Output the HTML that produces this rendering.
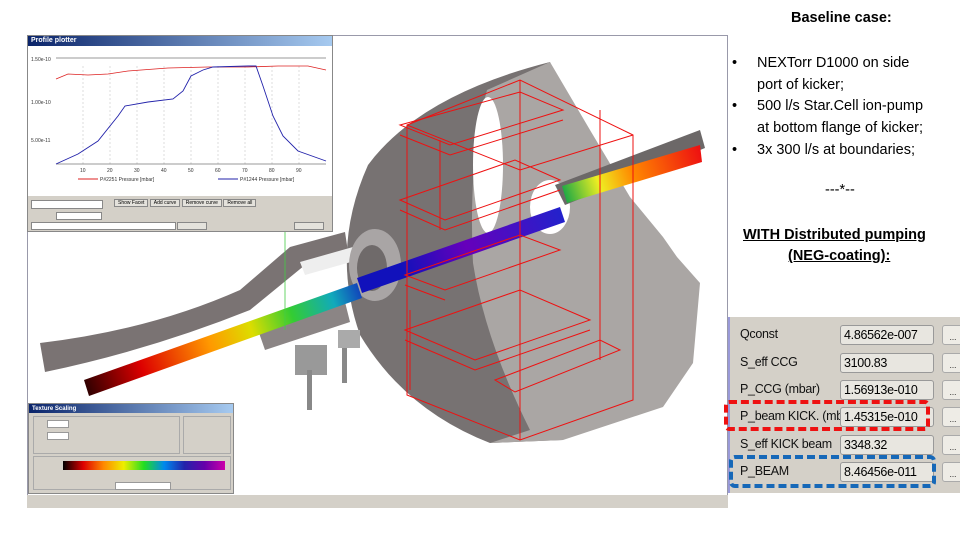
<!DOCTYPE html>
<html><head><meta charset="utf-8"><style>
*{margin:0;padding:0;box-sizing:border-box}
body{width:960px;height:540px;background:#fff;position:relative;overflow:hidden;font-family:"Liberation Sans",sans-serif}
.t{position:absolute;font-size:14.5px;color:#000;white-space:nowrap}
.win{position:absolute;background:#d4d0c8;border:1px solid #888}
.tb{height:10px;background:linear-gradient(90deg,#0a246a,#a6caf0);color:#fff;font-size:7px;font-weight:bold;padding-left:3px;line-height:10px}
.lbl{position:absolute;left:10px;font-size:12.5px;color:#111;letter-spacing:-0.3px}
.val{position:absolute;left:110px;width:94px;height:20px;border:1px solid #999;border-radius:3px;background:#e8e6e0;font-size:12.5px;padding-left:3px;line-height:19px;letter-spacing:-0.3px}
.btn{position:absolute;left:212px;width:22px;height:20px;border:1px solid #aaa;border-radius:3px;background:#eeece6;font-size:8px;text-align:center;line-height:24px}
</style></head><body>
<div style="position:absolute;left:27px;top:35px;width:701px;height:473px;border:1px solid #99a;background:#fff"></div>
<svg style="position:absolute;left:0;top:0" width="960" height="540">
<defs>
<linearGradient id="bm1" x1="87" y1="387" x2="360" y2="290" gradientUnits="userSpaceOnUse">
<stop offset="0" stop-color="#300"/><stop offset="0.2" stop-color="#d00"/><stop offset="0.45" stop-color="#f90"/><stop offset="0.6" stop-color="#dd0"/><stop offset="0.75" stop-color="#3c3"/><stop offset="0.9" stop-color="#1ab"/><stop offset="1" stop-color="#14b"/></linearGradient>
<linearGradient id="bm2" x1="400" y1="265" x2="560" y2="205" gradientUnits="userSpaceOnUse">
<stop offset="0" stop-color="#11b"/><stop offset="0.4" stop-color="#60b"/><stop offset="1" stop-color="#22c"/></linearGradient>
<linearGradient id="bm3" x1="565" y1="195" x2="700" y2="150" gradientUnits="userSpaceOnUse">
<stop offset="0" stop-color="#2a4"/><stop offset="0.25" stop-color="#ee2"/><stop offset="0.5" stop-color="#f80"/><stop offset="1" stop-color="#e11"/></linearGradient>
</defs>
<path d="M550,62 Q420,95 368,165 Q330,250 360,335 Q405,410 490,443 L563,440 L600,300 Z" fill="#777272"/>
<path d="M550,62 L590,130 L630,197 L663,237 L677,257 L700,283 L693,363 L663,407 L563,440 L490,443 L530,430 Q485,340 473,263 Q468,160 487,90 Z" fill="#aaa6a4"/>
<ellipse cx="488" cy="165" rx="15" ry="68" fill="#fff"/>
<ellipse cx="550" cy="207" rx="20" ry="27" fill="#fff"/>
<path d="M555,185 L700,130 L705,148 L565,205 Z" fill="#6c6868"/>
<path d="M40,343 Q150,330 240,290 L290,247 L345,232 L348,252 L305,265 L250,310 Q150,350 45,372 Z" fill="#7a7373"/>
<path d="M258,330 L345,302 L350,322 L265,350 Z" fill="#8b8585"/>
<path d="M300,262 L360,245 L365,258 L305,275 Z" fill="#eee"/>
<ellipse cx="375" cy="265" rx="26" ry="36" fill="#a9a5a5"/><ellipse cx="372" cy="268" rx="15" ry="23" fill="#6f6a6a"/>
<rect x="295" y="345" width="32" height="30" fill="#999"/><rect x="307" y="370" width="5" height="40" fill="#888"/>
<rect x="338" y="330" width="22" height="18" fill="#aaa"/><rect x="342" y="348" width="5" height="35" fill="#888"/>
<path d="M84,380 L357,283 L362,298 L89,396 Z" fill="url(#bm1)"/>
<path d="M357,278 L560,207 L565,222 L362,293 Z" fill="url(#bm2)"/>
<path d="M562,186 L700,145 L702,162 L567,203 Z" fill="url(#bm3)"/>
<line x1="285" y1="232" x2="285" y2="330" stroke="#4c4" stroke-width="0.8"/>
<g fill="none" stroke="#e11" stroke-width="1">
<path d="M407,125 L520,80 L633,135 L633,400 L520,440 L407,395 Z"/>
<path d="M520,80 L520,440 M407,125 L520,170 L633,135"/>
<path d="M400,125 L520,92 L563,110 L450,145 Z M400,135 L450,155 L563,120"/>
<path d="M400,200 L515,160 L560,180 L445,220 Z M400,210 L445,230 L560,190"/>
<path d="M405,275 L520,235 L560,250 L445,290 Z M405,285 L445,300"/>
<path d="M405,330 L520,290 L590,320 L475,360 Z M405,340 L475,370 L590,330"/>
<path d="M495,380 L600,340 L620,350 L515,392 Z"/>
<path d="M410,310 L410,390 M440,140 L440,230 M600,110 L600,360"/>
</g>
<rect x="27" y="495" width="701" height="13" fill="#d4d0c8"/>
</svg>
<div class="win" style="left:27px;top:35px;width:306px;height:197px">
<div class="tb">Profile plotter</div>
<svg width="304" height="150" style="background:#fff;display:block">
<g stroke="#bbb" stroke-dasharray="2,2" stroke-width="0.5"><line x1="55" y1="20" x2="55" y2="118"/><line x1="82" y1="20" x2="82" y2="118"/><line x1="109" y1="20" x2="109" y2="118"/><line x1="136" y1="20" x2="136" y2="118"/><line x1="163" y1="20" x2="163" y2="118"/><line x1="190" y1="20" x2="190" y2="118"/><line x1="217" y1="20" x2="217" y2="118"/><line x1="244" y1="20" x2="244" y2="118"/><line x1="271" y1="20" x2="271" y2="118"/></g>
<line x1="28" y1="12" x2="298" y2="12" stroke="#333" stroke-width="0.6"/>
<line x1="28" y1="118" x2="298" y2="118" stroke="#333" stroke-width="0.6"/>
<polyline fill="none" stroke="#d22" stroke-width="0.8" points="28,33 40,28 60,29 80,28 100,25 140,22 180,21 220,21 250,20 280,20 298,24"/>
<polyline fill="none" stroke="#22a" stroke-width="0.9" points="28,118 50,108 70,95 90,70 97,60 120,56 145,53 155,45 163,30 175,24 185,21 220,20 228,20 235,40 245,70 255,90 270,105 298,115"/>
<g font-size="5" fill="#333"><text x="3" y="15">1.50e-10</text><text x="3" y="58">1.00e-10</text><text x="3" y="96">5.00e-11</text></g>
<g font-size="5" fill="#333"><text x="52" y="126">10</text><text x="79" y="126">20</text><text x="106" y="126">30</text><text x="133" y="126">40</text><text x="160" y="126">50</text><text x="187" y="126">60</text><text x="214" y="126">70</text><text x="241" y="126">80</text><text x="268" y="126">90</text></g>
<line x1="50" y1="133" x2="70" y2="133" stroke="#d22"/><line x1="190" y1="133" x2="210" y2="133" stroke="#22a"/>
<g font-size="5" fill="#333"><text x="72" y="135">P#2251 Pressure [mbar]</text><text x="212" y="135">P#1244 Pressure [mbar]</text></g>
</svg>
<div style="position:absolute;left:3px;top:164px;width:72px;height:9px;background:#fff;border:1px solid #888"></div>
<div style="position:absolute;left:86px;top:164px;width:200px;height:9px;font-size:5px">
<span style="border:1px solid #888;padding:0 3px;background:#e4e2dc">Show Facet</span> <span style="border:1px solid #888;padding:0 3px;background:#e4e2dc">Add curve</span> <span style="border:1px solid #888;padding:0 3px;background:#e4e2dc">Remove curve</span> <span style="border:1px solid #888;padding:0 3px;background:#e4e2dc">Remove all</span></div>
<div style="position:absolute;left:28px;top:176px;width:46px;height:8px;background:#fff;border:1px solid #888"></div>
<div style="position:absolute;left:3px;top:186px;width:145px;height:8px;background:#fff;border:1px solid #888"></div>
<div style="position:absolute;left:149px;top:186px;width:30px;height:8px;background:#e4e2dc;border:1px solid #888"></div>
<div style="position:absolute;left:266px;top:186px;width:30px;height:8px;background:#e4e2dc;border:1px solid #888"></div>
</div>
<div class="win" style="left:28px;top:403px;width:206px;height:91px">
<div class="tb" style="height:9px;font-size:6px">Texture Scaling</div>
<div style="position:absolute;left:4px;top:12px;width:147px;height:38px;border:1px solid #aaa"></div>
<div style="position:absolute;left:154px;top:12px;width:48px;height:38px;border:1px solid #aaa"></div>
<div style="position:absolute;left:4px;top:52px;width:198px;height:34px;border:1px solid #aaa"></div>
<div style="position:absolute;left:18px;top:16px;width:22px;height:8px;background:#fff;border:1px solid #999"></div>
<div style="position:absolute;left:18px;top:28px;width:22px;height:8px;background:#fff;border:1px solid #999"></div>
<div style="position:absolute;left:34px;top:57px;width:162px;height:9px;background:linear-gradient(90deg,#000,#d00,#f80,#ee0,#2d2,#08e,#22a,#60a,#c0a)"></div>
<div style="position:absolute;left:86px;top:78px;width:56px;height:8px;background:#fff;border:1px solid #999"></div>
</div>
<div class="t" style="left:791px;top:10px;font-weight:bold">Baseline case:</div>
<div class="t" style="left:732px;top:53px;line-height:21.7px">•<br><br>•<br><br>•</div>
<div class="t" style="left:757px;top:53px;line-height:21.7px">NEXTorr D1000 on side<br>port of kicker;<br>500 l/s Star.Cell ion-pump<br>at bottom flange of kicker;<br>3x 300 l/s at boundaries;</div>
<div class="t" style="left:825px;top:182px">---*--</div>
<div class="t" style="left:743px;top:227px;font-weight:bold;text-decoration:underline">WITH Distributed pumping</div>
<div class="t" style="left:788px;top:248px;font-weight:bold;text-decoration:underline">(NEG-coating):</div>
<div style="position:absolute;left:728px;top:317px;width:232px;height:176px;background:#d4d0c8;border-left:2px solid #9a9ad8">
<div class="lbl" style="top:10px">Qconst</div><div class="val" style="top:8px">4.86562e-007</div><div class="btn" style="top:8px">...</div>
<div class="lbl" style="top:38px">S_eff CCG</div><div class="val" style="top:36px">3100.83</div><div class="btn" style="top:36px">...</div>
<div class="lbl" style="top:65px">P_CCG (mbar)</div><div class="val" style="top:63px">1.56913e-010</div><div class="btn" style="top:63px">...</div>
<div class="lbl" style="top:92px">P_beam KICK. (mb</div><div class="val" style="top:90px">1.45315e-010</div><div class="btn" style="top:90px">...</div>
<div class="lbl" style="top:120px">S_eff KICK beam</div><div class="val" style="top:118px">3348.32</div><div class="btn" style="top:118px">...</div>
<div class="lbl" style="top:147px">P_BEAM</div><div class="val" style="top:145px">8.46456e-011</div><div class="btn" style="top:145px">...</div>
</div>
<div style="position:absolute;left:724px;top:400px;width:206px;height:31px;border:4px dashed #e11;border-radius:5px"></div>
<div style="position:absolute;left:729px;top:455px;width:207px;height:33px;border:4px dashed #1668b8;border-radius:6px"></div>
</body></html>
